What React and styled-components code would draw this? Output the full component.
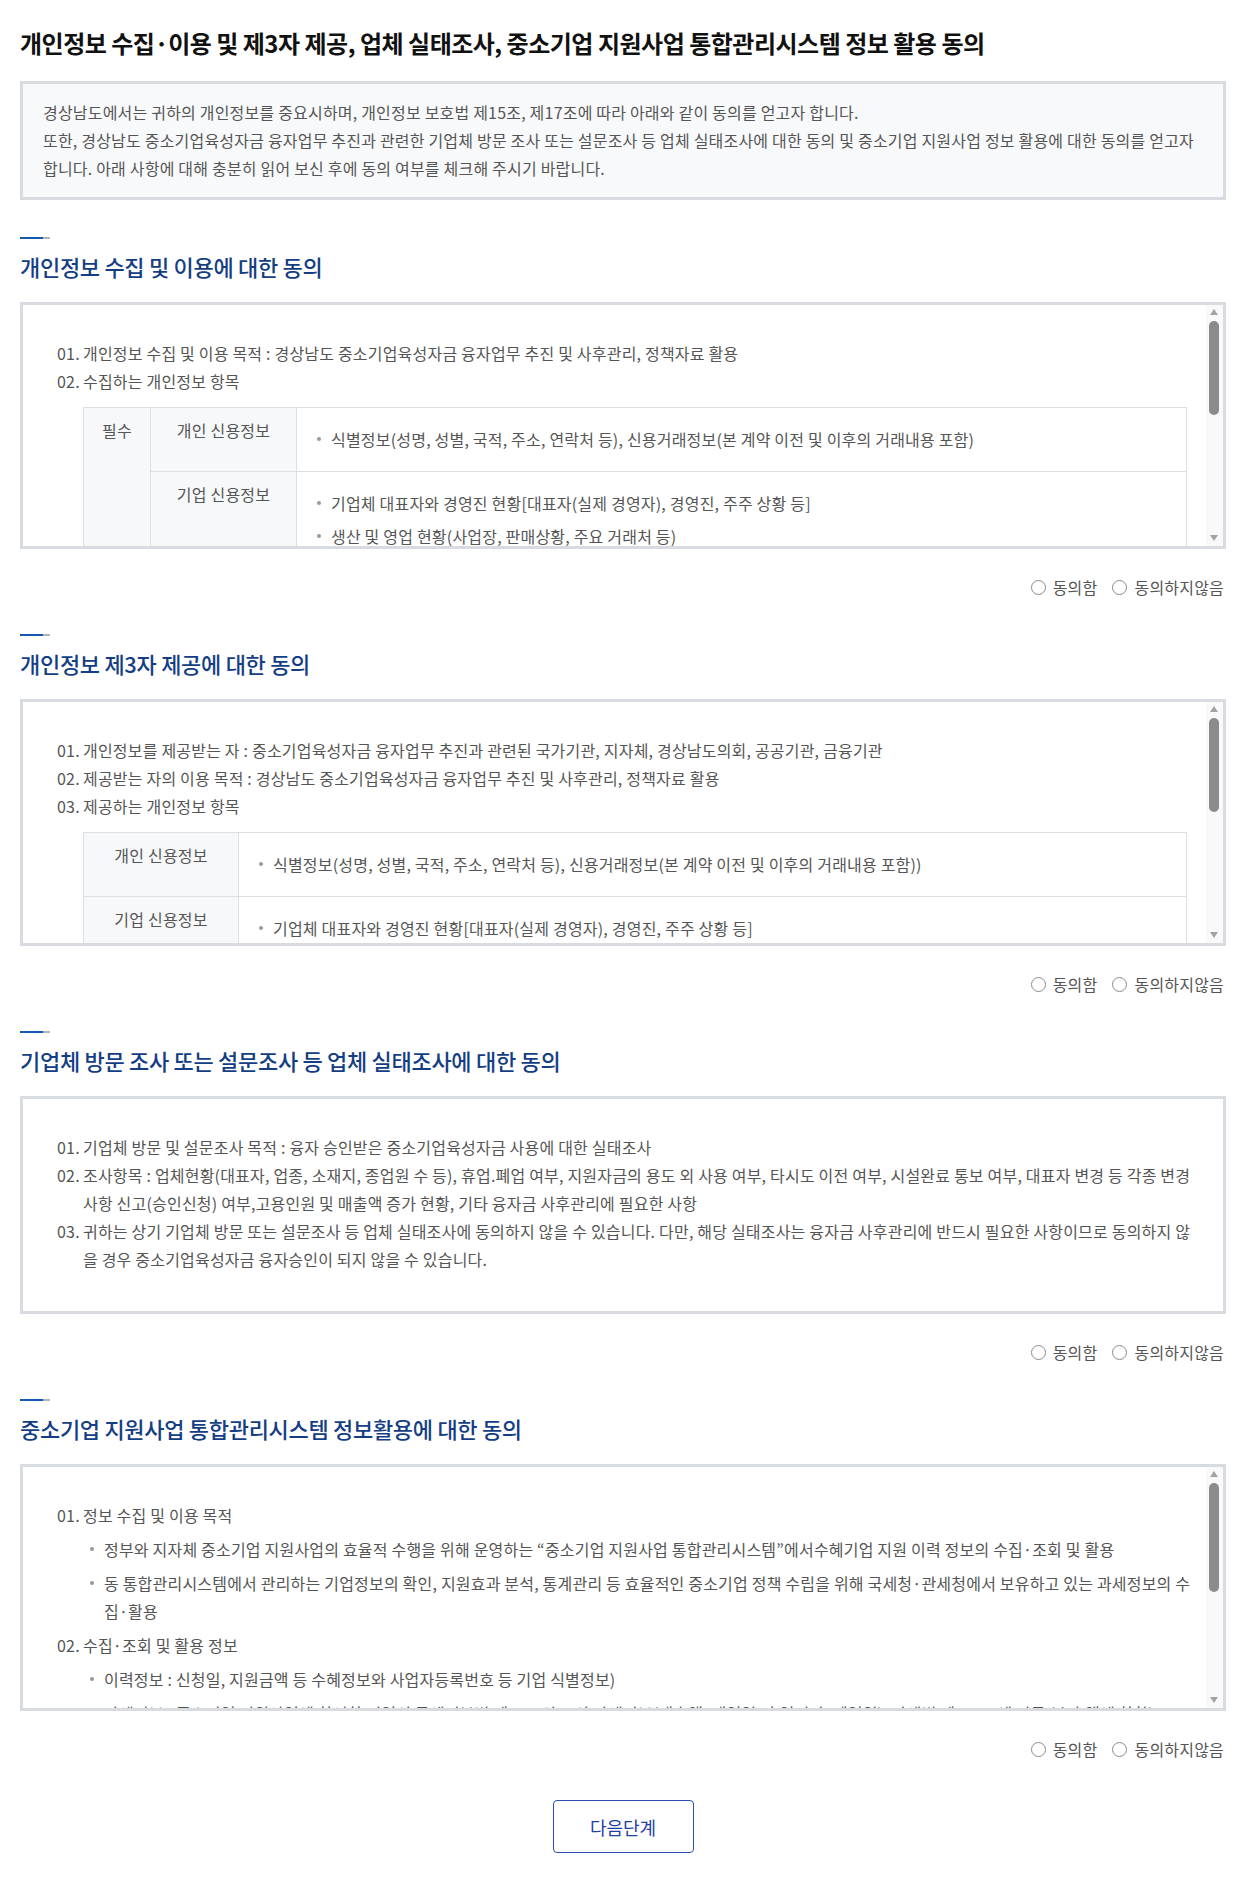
import React from "react";
import styled, { createGlobalStyle, css } from "styled-components";

const GlobalStyle = createGlobalStyle`
  html, body { margin: 0; padding: 0; background: #fff; }
  body {
    font-family: "Noto Sans CJK KR", "Noto Sans", sans-serif;
    color: #555;
    -webkit-font-smoothing: antialiased;
  }
  * { box-sizing: border-box; }
`;

const bodyText = css`
  font-size: 16px;
  line-height: 28px;
  letter-spacing: 0.2px;
  color: #555;
`;

const Page = styled.div`
  width: 1246px;
  padding: 28px 20px 42px;
`;

const Title = styled.h1`
  margin: 0;
  font-size: 24px;
  line-height: 30px;
  font-weight: 700;
  color: #111;
  letter-spacing: -0.5px;
`;

const Intro = styled.div`
  ${bodyText};
  margin-top: 23px;
  border: 3px solid #d8dbe0;
  background: #f8f9fb;
  padding: 14px 20px 15px;
`;

const Line = styled.span`
  display: block;
  white-space: nowrap;
`;

const Section = styled.section`
  margin-top: 37px;
`;

const Bar = styled.div`
  width: 30px;
  height: 2px;
  background: linear-gradient(to right, #1459b2 23px, #b3b3b3 23px);
`;

const Heading = styled.h2`
  margin: 13px 0 0;
  font-size: 22px;
  line-height: 28px;
  font-weight: 500;
  color: #143e84;
  letter-spacing: -0.3px;
`;

const Box = styled.div`
  ${bodyText};
  margin-top: 22px;
  border: 3px solid #d8dbe0;
  background: #fff;
  padding: 34px 19px 38px 34px;
`;

const Frame = styled.div`
  position: relative;
  margin-top: 22px;
  height: 247px;
  border: 3px solid #d8dbe0;
  background: #fff;
  overflow: hidden;
`;

const ScrollArea = styled.div`
  ${bodyText};
  height: 100%;
  overflow-y: auto;
  padding: 34px 36px 34px 34px;
  scrollbar-width: none;
  &::-webkit-scrollbar { display: none; }
`;

const Rail = styled.div`
  position: absolute;
  top: 0;
  right: 0;
  bottom: 0;
  width: 17px;
  background: #f9f9f9;
  pointer-events: none;
`;

const Arrow = styled.span`
  position: absolute;
  left: 4px;
  width: 0;
  height: 0;
  border-left: 4.5px solid transparent;
  border-right: 4.5px solid transparent;
  ${(p) =>
    p.$down
      ? css`
          bottom: 5px;
          border-top: 6px solid #a3a3a3;
        `
      : css`
          top: 4px;
          border-bottom: 6px solid #a3a3a3;
        `}
`;

const Thumb = styled.span`
  position: absolute;
  top: 16px;
  left: 3px;
  width: 10px;
  height: ${(p) => p.$h}px;
  border-radius: 5px;
  background: #8b8b8b;
`;

function ScrollBox({ thumb, children }) {
  return (
    <Frame>
      <ScrollArea>{children}</ScrollArea>
      <Rail aria-hidden="true">
        <Arrow />
        <Thumb $h={thumb} />
        <Arrow $down />
      </Rail>
    </Frame>
  );
}

const Item = styled.div`
  display: flex;
  margin-top: ${(p) => p.$gap || 0}px;
`;

const Num = styled.span`
  flex: 0 0 26px;
`;

const ItemText = styled.div`
  flex: 1;
`;

const BulletList = styled.ul`
  list-style: none;
  margin: 0;
  padding: 0 0 0 ${(p) => p.$indent || 0}px;
`;

const Bullet = styled.li`
  position: relative;
  padding-left: 14px;
  margin-top: ${(p) => p.$gap ?? 6}px;
  line-height: ${(p) => p.$lh || 28}px;

  &::before {
    content: "";
    position: absolute;
    left: 0;
    top: ${(p) => (p.$lh || 28) / 2 - 2}px;
    width: 4px;
    height: 4px;
    border-radius: 50%;
    background: #999;
  }
`;

const Table = styled.table`
  margin: 12px 0 0 26px;
  width: calc(100% - 26px);
  border-collapse: collapse;
  border-top: 1px solid #dcdfe4;
  font-size: 16px;
  letter-spacing: 0.2px;
`;

const Th = styled.th`
  width: ${(p) => p.$w}px;
  background: #f7f8fa;
  border: 1px solid #dcdfe4;
  border-top: 0;
  font-weight: 400;
  color: #555;
  vertical-align: top;
  text-align: center;
  padding: 8px 4px;
  line-height: 28px;
  white-space: nowrap;
`;

const Td = styled.td`
  border: 1px solid #dcdfe4;
  border-top: 0;
  vertical-align: middle;
  padding: 18px 16px 19px 20px;
  line-height: 26px;
`;

const Radios = styled.div`
  margin-top: 28px;
  display: flex;
  justify-content: flex-end;
  align-items: center;
  gap: 15px;
  padding-right: 2px;
  height: 20px;
`;

const RadioLabel = styled.label`
  display: flex;
  align-items: center;
  gap: 7px;
  font-size: 16px;
  letter-spacing: 0.2px;
  color: #555;
  cursor: pointer;
`;

const RadioInput = styled.input`
  appearance: none;
  margin: 0;
  width: 15px;
  height: 15px;
  border: 1px solid #8a8a8a;
  border-radius: 50%;
  background: #fff;
  &:checked {
    border-color: #1459b2;
    background: radial-gradient(circle, #1459b2 0 3.5px, #fff 4px);
  }
`;

const ButtonRow = styled.div`
  margin-top: 41px;
  display: flex;
  justify-content: center;
`;

const NextButton = styled.button`
  width: 141px;
  height: 53px;
  border: 1px solid #2c4db5;
  border-radius: 4px;
  background: #fff;
  color: #1f3fa6;
  font-family: inherit;
  font-size: 18px;
  cursor: pointer;
`;

function Agree({ name }) {
  return (
    <Radios>
      <RadioLabel>
        <RadioInput type="radio" name={name} value="Y" />
        동의함
      </RadioLabel>
      <RadioLabel>
        <RadioInput type="radio" name={name} value="N" />
        동의하지않음
      </RadioLabel>
    </Radios>
  );
}

function NumItem({ n, gap, children }) {
  return (
    <Item $gap={gap}>
      <Num>{n}</Num>
      <ItemText>{children}</ItemText>
    </Item>
  );
}

const corpBullets = [
  "기업체 대표자와 경영진 현황[대표자(실제 경영자), 경영진, 주주 상황 등]",
  "생산 및 영업 현황(사업장, 판매상황, 주요 거래처 등)",
  "재무 현황(재무제표, 부채 및 담보 현황 등)",
];

export default function App() {
  return (
    <>
      <GlobalStyle />
      <Page>
        <Title>개인정보 수집·이용 및 제3자 제공, 업체 실태조사, 중소기업 지원사업 통합관리시스템 정보 활용 동의</Title>
        <Intro>
          <Line>경상남도에서는 귀하의 개인정보를 중요시하며, 개인정보 보호법 제15조, 제17조에 따라 아래와 같이 동의를 얻고자 합니다.</Line>
          <Line>또한, 경상남도 중소기업육성자금 융자업무 추진과 관련한 기업체 방문 조사 또는 설문조사 등 업체 실태조사에 대한 동의 및 중소기업 지원사업 정보 활용에 대한 동의를 얻고자</Line>
          <Line>합니다. 아래 사항에 대해 충분히 읽어 보신 후에 동의 여부를 체크해 주시기 바랍니다.</Line>
        </Intro>

        <Section>
          <Bar />
          <Heading>개인정보 수집 및 이용에 대한 동의</Heading>
          <ScrollBox thumb={94}>
            <NumItem n="01.">개인정보 수집 및 이용 목적 : 경상남도 중소기업육성자금 융자업무 추진 및 사후관리, 정책자료 활용</NumItem>
            <NumItem n="02.">수집하는 개인정보 항목</NumItem>
            <Table>
              <tbody>
                <tr>
                  <Th $w={67} rowSpan={2}>필수</Th>
                  <Th $w={146}>개인 신용정보</Th>
                  <Td>
                    <BulletList>
                      <Bullet $gap={0} $lh={26}>식별정보(성명, 성별, 국적, 주소, 연락처 등), 신용거래정보(본 계약 이전 및 이후의 거래내용 포함)</Bullet>
                    </BulletList>
                  </Td>
                </tr>
                <tr>
                  <Th $w={146}>기업 신용정보</Th>
                  <Td>
                    <BulletList>
                      {corpBullets.map((b, i) => (
                        <Bullet key={b} $gap={i === 0 ? 0 : 7} $lh={26}>{b}</Bullet>
                      ))}
                    </BulletList>
                  </Td>
                </tr>
              </tbody>
            </Table>
            <NumItem n="03." gap={12}>개인정보 보유 및 이용기간 : 융자금 상환 완료 후 5년까지</NumItem>
            <NumItem n="04.">동의를 거부할 권리 및 동의 거부에 따른 불이익 : 귀하는 동의를 거부할 권리가 있으나, 동의하지 않을 경우 융자 신청이 제한될 수 있습니다.</NumItem>
          </ScrollBox>
          <Agree name="agree1" />
        </Section>

        <Section>
          <Bar />
          <Heading>개인정보 제3자 제공에 대한 동의</Heading>
          <ScrollBox thumb={94}>
            <NumItem n="01.">개인정보를 제공받는 자 : 중소기업육성자금 융자업무 추진과 관련된 국가기관, 지자체, 경상남도의회, 공공기관, 금융기관</NumItem>
            <NumItem n="02.">제공받는 자의 이용 목적 : 경상남도 중소기업육성자금 융자업무 추진 및 사후관리, 정책자료 활용</NumItem>
            <NumItem n="03.">제공하는 개인정보 항목</NumItem>
            <Table>
              <tbody>
                <tr>
                  <Th $w={155}>개인 신용정보</Th>
                  <Td>
                    <BulletList>
                      <Bullet $gap={0} $lh={26}>식별정보(성명, 성별, 국적, 주소, 연락처 등), 신용거래정보(본 계약 이전 및 이후의 거래내용 포함))</Bullet>
                    </BulletList>
                  </Td>
                </tr>
                <tr>
                  <Th $w={155}>기업 신용정보</Th>
                  <Td>
                    <BulletList>
                      {corpBullets.map((b, i) => (
                        <Bullet key={b} $gap={i === 0 ? 0 : 7} $lh={26}>{b}</Bullet>
                      ))}
                    </BulletList>
                  </Td>
                </tr>
              </tbody>
            </Table>
            <NumItem n="04." gap={12}>제공받는 자의 보유 및 이용기간 : 융자금 상환 완료 후 5년까지</NumItem>
          </ScrollBox>
          <Agree name="agree2" />
        </Section>

        <Section>
          <Bar />
          <Heading>기업체 방문 조사 또는 설문조사 등 업체 실태조사에 대한 동의</Heading>
          <Box>
            <NumItem n="01.">기업체 방문 및 설문조사 목적 : 융자 승인받은 중소기업육성자금 사용에 대한 실태조사</NumItem>
            <NumItem n="02.">
              <Line>조사항목 : 업체현황(대표자, 업종, 소재지, 종업원 수 등), 휴업.폐업 여부, 지원자금의 용도 외 사용 여부, 타시도 이전 여부, 시설완료 통보 여부, 대표자 변경 등 각종 변경</Line>
              <Line>사항 신고(승인신청) 여부,고용인원 및 매출액 증가 현황, 기타 융자금 사후관리에 필요한 사항</Line>
            </NumItem>
            <NumItem n="03.">
              <Line>귀하는 상기 기업체 방문 또는 설문조사 등 업체 실태조사에 동의하지 않을 수 있습니다. 다만, 해당 실태조사는 융자금 사후관리에 반드시 필요한 사항이므로 동의하지 않</Line>
              <Line>을 경우 중소기업육성자금 융자승인이 되지 않을 수 있습니다.</Line>
            </NumItem>
          </Box>
          <Agree name="agree3" />
        </Section>

        <Section>
          <Bar />
          <Heading>중소기업 지원사업 통합관리시스템 정보활용에 대한 동의</Heading>
          <ScrollBox thumb={109}>
            <NumItem n="01.">정보 수집 및 이용 목적</NumItem>
            <BulletList $indent={33}>
              <Bullet>
                <Line>정부와 지자체 중소기업 지원사업의 효율적 수행을 위해 운영하는 “중소기업 지원사업 통합관리시스템”에서수혜기업 지원 이력 정보의 수집·조회 및 활용</Line>
              </Bullet>
              <Bullet>
                <Line>동 통합관리시스템에서 관리하는 기업정보의 확인, 지원효과 분석, 통계관리 등 효율적인 중소기업 정책 수립을 위해 국세청·관세청에서 보유하고 있는 과세정보의 수</Line>
                <Line>집·활용</Line>
              </Bullet>
            </BulletList>
            <NumItem n="02." gap={6}>수집·조회 및 활용 정보</NumItem>
            <BulletList $indent={33}>
              <Bullet>이력정보 : 신청일, 지원금액 등 수혜정보와 사업자등록번호 등 기업 식별정보)</Bullet>
              <Bullet>
                <Line>과세정보 : 중소기업 지원사업에 참여한 기업의 국세기본법 제81조의13의 과세정보(매출액, 개업일, 휴업기간, 폐업일), 관세법 제116조에 따른 (수출액에 한함)</Line>
              </Bullet>
            </BulletList>
            <NumItem n="03." gap={6}>보유 및 이용기간 : 동의일로부터 지원사업 종료 후 5년까지</NumItem>
            <NumItem n="04." gap={6}>동의를 거부할 권리가 있으며, 동의 거부 시 지원사업 참여가 제한될 수 있습니다.</NumItem>
          </ScrollBox>
          <Agree name="agree4" />
        </Section>

        <ButtonRow>
          <NextButton type="button">다음단계</NextButton>
        </ButtonRow>
      </Page>
    </>
  );
}
